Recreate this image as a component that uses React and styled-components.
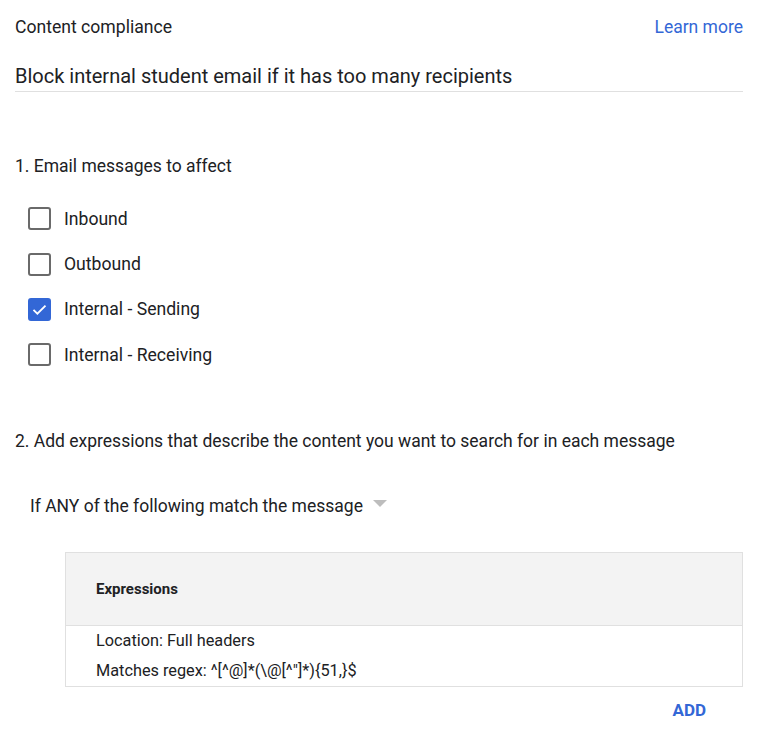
import React from "react";
import styled, { createGlobalStyle } from "styled-components";

const Global = createGlobalStyle`
  html, body { margin: 0; padding: 0; background: #fff; }
  body { font-family: Roboto, "Noto Sans", Arial, sans-serif; color: #202124; }
`;

const Page = styled.div`
  width: 728px;
  padding: 15px 26px 0 15px;
`;

const HeaderRow = styled.div`
  display: flex;
  justify-content: space-between;
  align-items: center;
  height: 24px;
`;

const Label = styled.div`
  font-size: 17.6px;
  line-height: 24px;
  color: #202124;
`;

const Link = styled.a`
  font-size: 17.5px;
  line-height: 24px;
  color: #3367d6;
  text-decoration: none;
`;

const Title = styled.div`
  margin-top: 23px;
  font-size: 20px;
  line-height: 28px;
  padding-bottom: 1px;
  border-bottom: 1px solid #e0e0e0;
  color: #202124;
`;

const SectionHeading = styled.div`
  margin-top: ${(p) => p.$mt}px;
  font-size: 17.5px;
  line-height: 24px;
  color: #202124;
`;

const CheckList = styled.div`
  margin-top: 18px;
  padding-left: 13px;
  display: flex;
  flex-direction: column;
`;

const CheckRow = styled.label`
  display: flex;
  align-items: center;
  height: 45.4px;
  gap: 13px;
  font-size: 17.6px;
  color: #202124;
`;

const Box = styled.span`
  box-sizing: border-box;
  width: 23px;
  height: 23px;
  border-radius: 3px;
  border: 2px solid ${(p) => (p.$checked ? "#3367d6" : "#6a6a6a")};
  background: ${(p) => (p.$checked ? "#3367d6" : "#fff")};
  display: flex;
  align-items: center;
  justify-content: center;
  flex: none;
`;

const Selector = styled.div`
  margin-top: 41px;
  padding-left: 15px;
  display: flex;
  align-items: center;
  gap: 10px;
  font-size: 17.5px;
  line-height: 24px;
`;

const Caret = styled.span`
  width: 0;
  height: 0;
  border-left: 7px solid transparent;
  border-right: 7px solid transparent;
  border-top: 7px solid #bdbdbd;
  margin-top: -4px;
`;

const Table = styled.div`
  margin-top: 34px;
  margin-left: 50px;
  border: 1px solid #e0e0e0;
`;

const TableHead = styled.div`
  height: 72px;
  background: #f3f3f3;
  border-bottom: 1px solid #e0e0e0;
  display: flex;
  align-items: center;
  padding-left: 30px;
  font-size: 15px;
  font-weight: 700;
  color: #202124;
`;

const TableBody = styled.div`
  padding-left: 30px;
  font-size: 16.3px;
  line-height: 30px;
  color: #202124;
`;

const Actions = styled.div`
  display: flex;
  justify-content: flex-end;
  margin-top: 11px;
  padding-right: 37px;
`;

const AddButton = styled.button`
  background: none;
  border: none;
  padding: 0;
  font-family: inherit;
  font-size: 17px;
  line-height: 24px;
  font-weight: 700;
  color: #3367d6;
`;

const items = [
  { label: "Inbound", checked: false },
  { label: "Outbound", checked: false },
  { label: "Internal - Sending", checked: true },
  { label: "Internal - Receiving", checked: false },
];

export default function App() {
  return (
    <>
      <Global />
      <Page>
        <HeaderRow>
          <Label>Content compliance</Label>
          <Link href="#">Learn more</Link>
        </HeaderRow>
        <Title>Block internal student email if it has too many recipients</Title>
        <SectionHeading $mt={62}>1. Email messages to affect</SectionHeading>
        <CheckList>
          {items.map((it) => (
            <CheckRow key={it.label}>
              <Box $checked={it.checked}>
                {it.checked && (
                  <svg width="17" height="17" viewBox="0 0 24 24">
                    <path d="M3.5 12.5l5.5 5.5L20.5 6.5" fill="none" stroke="#fff" strokeWidth="2.6" />
                  </svg>
                )}
              </Box>
              {it.label}
            </CheckRow>
          ))}
        </CheckList>
        <SectionHeading $mt={51}>
          2. Add expressions that describe the content you want to search for in each message
        </SectionHeading>
        <Selector>
          If ANY of the following match the message
          <Caret />
        </Selector>
        <Table>
          <TableHead>Expressions</TableHead>
          <TableBody>
            <div>Location: Full headers</div>
            <div>Matches regex: ^[^@]*(\@[^"]*){"{"}51,{"}"}$</div>
          </TableBody>
        </Table>
        <Actions>
          <AddButton>ADD</AddButton>
        </Actions>
      </Page>
    </>
  );
}
